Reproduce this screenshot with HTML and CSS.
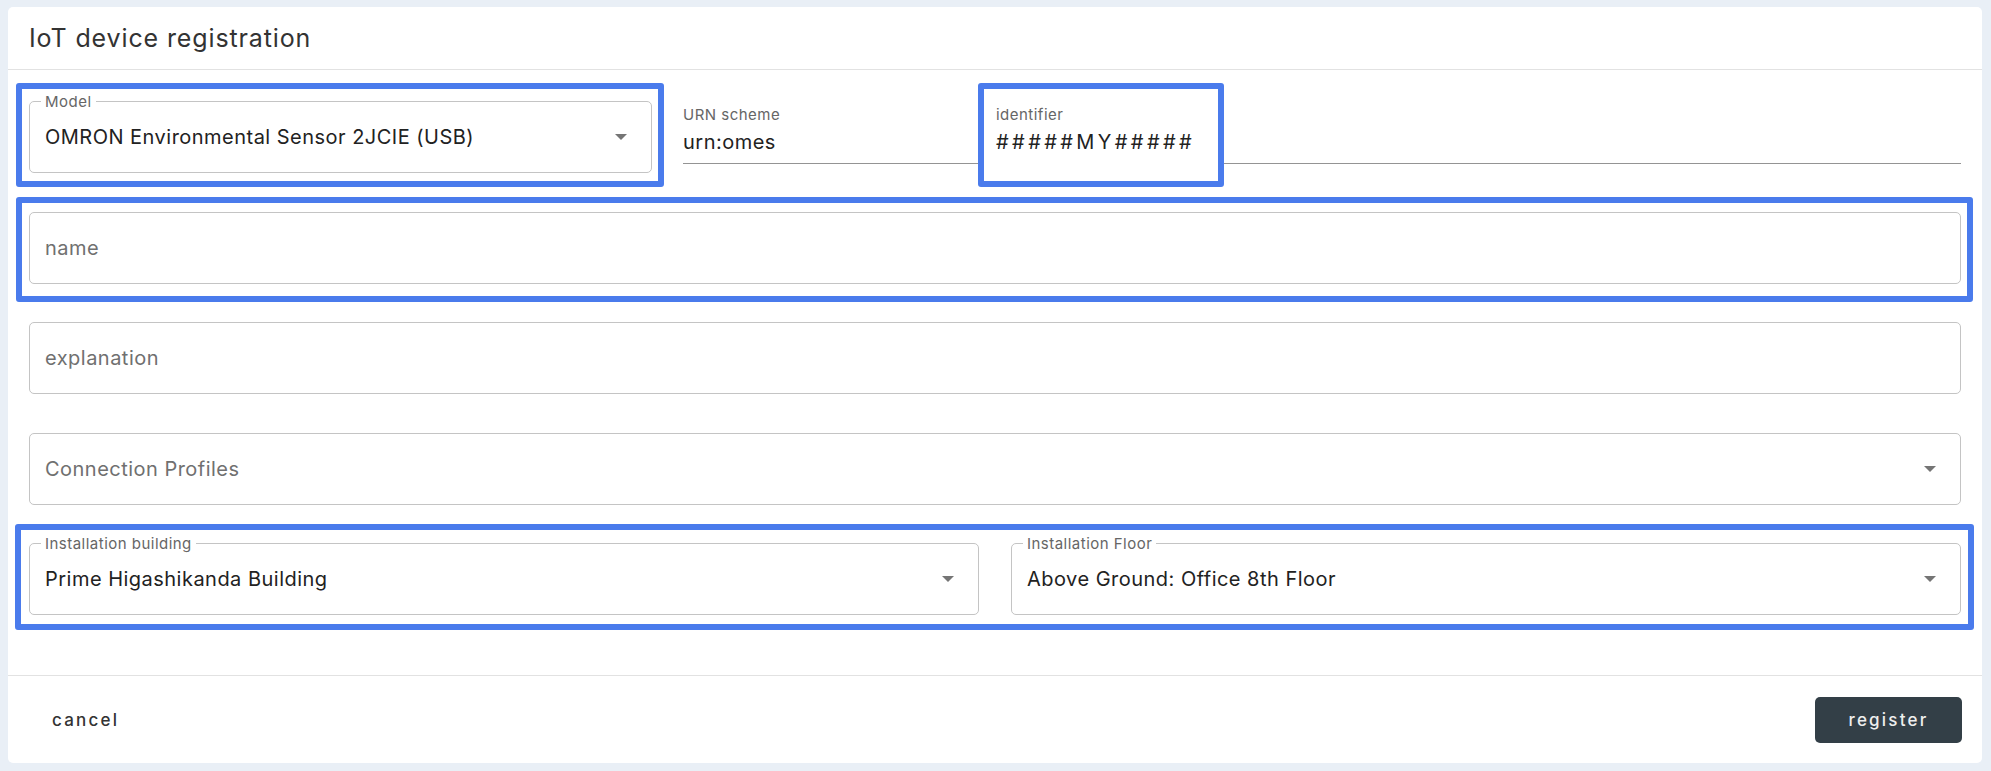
FILE: index.html
```html
<!DOCTYPE html>
<html lang="en">
<head>
    <meta charset="UTF-8">
    <meta name="viewport" content="width=device-width, initial-scale=1.0">
    <title>IoT device registration</title>
    <link rel="stylesheet" href="styles.css">
</head>
<body>
    <div class="card">
        <div class="card-head">
            <h1>IoT device registration</h1>
        </div>

        <div class="card-body">
            <!-- model / urn / identifier -->
            <div class="row">
                <div class="field outlined model mark">
                    <span class="legend">Model</span>
                    <span class="value">OMRON Environmental Sensor 2JCIE (USB)</span>
                    <svg class="arrow" width="12" height="6" viewBox="0 0 12 6"><path d="M0 0 L12 0 L6 6 Z"/></svg>
                </div>
                <div class="field standard urn">
                    <span class="label">URN scheme</span>
                    <span class="value">urn:omes</span>
                </div>
                <div class="field standard ident mark-id">
                    <span class="label">identifier</span>
                    <span class="value hashes">#####MY#####</span>
                </div>
            </div>

            <div class="field outlined mark mark-wide">
                <span class="placeholder">name</span>
            </div>

            <div class="field outlined">
                <span class="placeholder">explanation</span>
            </div>

            <div class="field outlined">
                <span class="placeholder">Connection Profiles</span>
                <svg class="arrow" width="12" height="6" viewBox="0 0 12 6"><path d="M0 0 L12 0 L6 6 Z"/></svg>
            </div>

            <!-- installation place -->
            <div class="row place mark">
                <div class="field outlined">
                    <span class="legend">Installation building</span>
                    <span class="value">Prime Higashikanda Building</span>
                    <svg class="arrow" width="12" height="6" viewBox="0 0 12 6"><path d="M0 0 L12 0 L6 6 Z"/></svg>
                </div>
                <div class="field outlined">
                    <span class="legend">Installation Floor</span>
                    <span class="value">Above Ground: Office 8th Floor</span>
                    <svg class="arrow" width="12" height="6" viewBox="0 0 12 6"><path d="M0 0 L12 0 L6 6 Z"/></svg>
                </div>
            </div>
        </div>

        <div class="card-foot">
            <button class="btn btn-text">cancel</button>
            <button class="btn btn-dark">register</button>
        </div>
    </div>
</body>
</html>
```

FILE: styles.css
```css
body {
    margin: 0;
    padding: 7px 9px 8px 8px;
    background-color: #e9eff6;
    font-family: Inter, "Open Sans", sans-serif;
    letter-spacing: 0.03em;
    color: #222;
}
.card {
    background: #fff;
    border-radius: 5px;
    height: 756px;
    display: flex;
    flex-direction: column;
}
.card-head {
    height: 62px;
    border-bottom: 1px solid #e2e2e2;
    display: flex;
    align-items: center;
    padding-left: 21px;
}
h1 {
    margin: 0;
    font-size: 25px;
    font-weight: 400;
    letter-spacing: 0.035em;
    color: #333;
}
.card-body {
    padding: 31px 21px 0 21px;
    display: flex;
    flex-direction: column;
    gap: 38.5px;
    flex: 1;
}
.row {
    display: flex;
    align-items: flex-start;
}
.field {
    position: relative;
    box-sizing: border-box;
}
.outlined {
    height: 72px;
    border: 1px solid #c4c4c4;
    border-radius: 5px;
    display: flex;
    align-items: center;
    padding-left: 15px;
    font-size: 20px;
}
.legend {
    position: absolute;
    top: -10px;
    left: 11px;
    padding: 0 4px;
    background: #fff;
    font-size: 15px;
    color: #666;
}
.value {
    flex: 1;
    color: #222;
}
.placeholder {
    flex: 1;
    color: #707070;
}
.arrow {
    fill: #757575;
    margin-right: 24px;
}
.model {
    width: 623px;
}
.standard {
    height: 63px;
    border-bottom: 1px solid #949494;
    display: flex;
    flex-direction: column;
    padding-top: 4px;
}
.standard .label {
    font-size: 15px;
    color: #666;
}
.standard .value {
    font-size: 20px;
    margin-top: 6px;
}
.standard .hashes {
    letter-spacing: 0.17em;
}
.urn {
    margin-left: 31px;
    width: 313px;
}
.ident {
    flex: 1;
}
.place {
    position: relative;
    gap: 32px;
}
.place .field {
    flex: 1;
}

/* blue marker frames drawn over fields */
.mark::after,
.mark-id::after {
    content: "";
    position: absolute;
    border: 6px solid #4a7bec;
    border-radius: 3px;
    pointer-events: none;
}
.mark::after {
    top: -19px;
    right: -13px;
    bottom: -15px;
    left: -14px;
}
.mark-wide::after {
    top: -16px;
    bottom: -19px;
}
.mark-id::after {
    top: -18px;
    left: -18px;
    width: 246px;
    bottom: -24px;
    box-sizing: border-box;
}
/* the underline is hidden inside the identifier frame */
.mark-id::before {
    content: "";
    position: absolute;
    left: -12px;
    width: 234px;
    bottom: -2px;
    height: 3px;
    background: #fff;
}

.card-foot {
    height: 87px;
    border-top: 1px solid #e2e2e2;
    display: flex;
    align-items: center;
    justify-content: space-between;
    padding: 0 20px 0 34px;
}
.btn {
    font-family: inherit;
    font-size: 17px;
    font-weight: 500;
    letter-spacing: 0.13em;
    border: none;
    border-radius: 5px;
    cursor: pointer;
}
.btn-text {
    background: none;
    color: #333;
    padding: 10px;
}
.btn-dark {
    background: #333f47;
    color: #eee;
    width: 147px;
    height: 46px;
}
```
